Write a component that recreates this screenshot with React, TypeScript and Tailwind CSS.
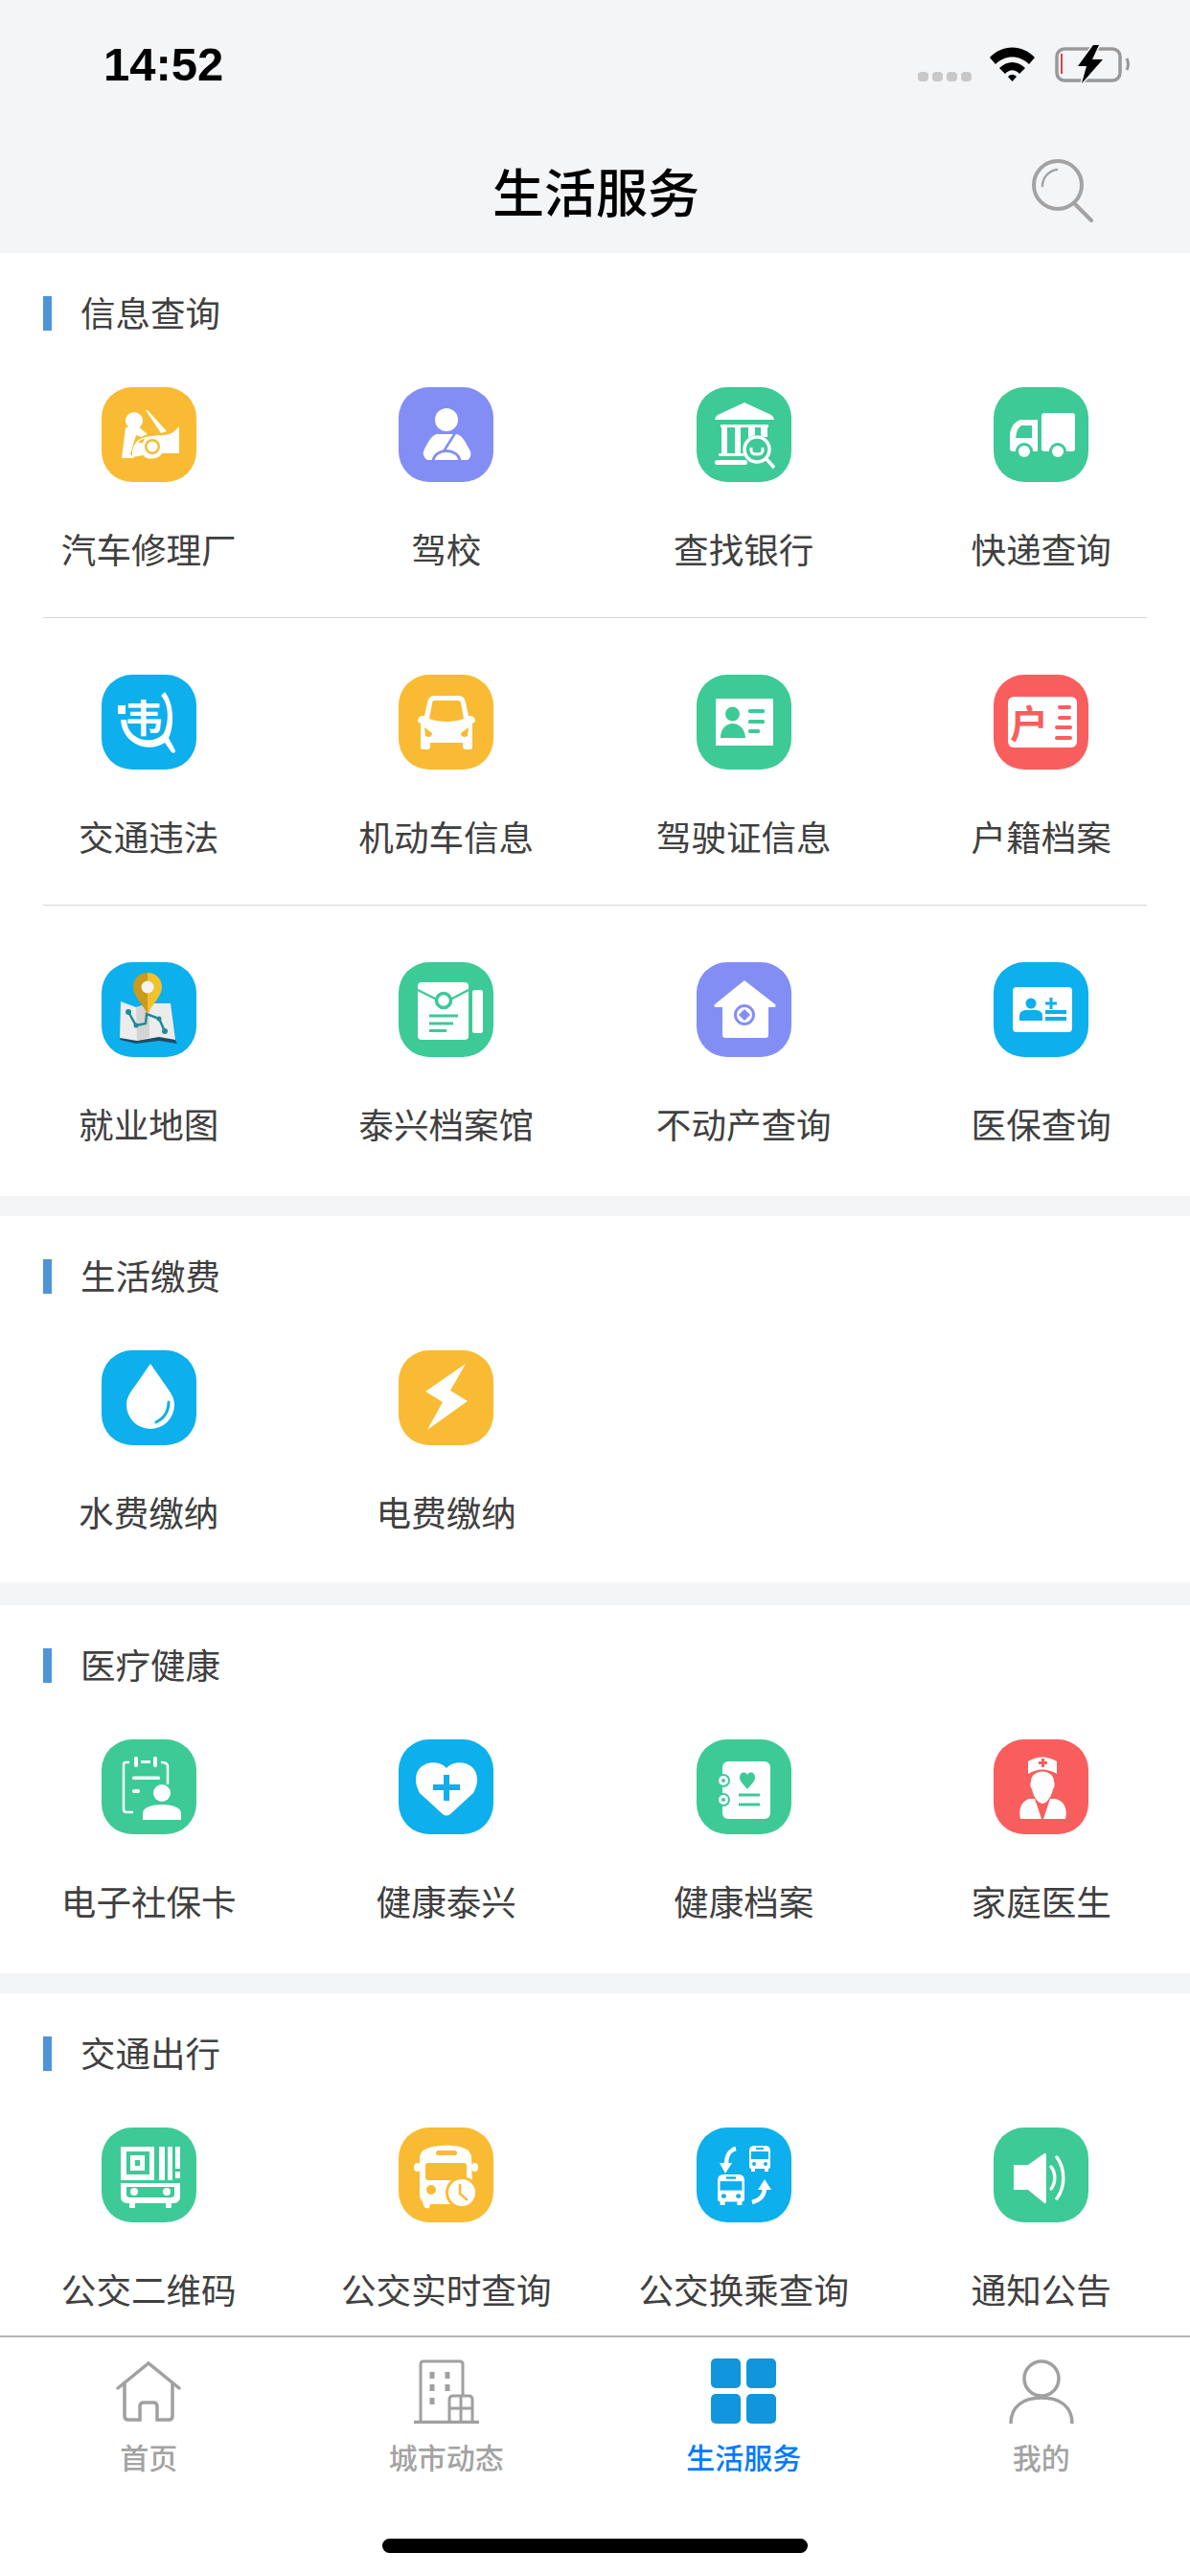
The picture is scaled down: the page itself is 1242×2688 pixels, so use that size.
import React from "react";

const W = "#fff";
const Orange = "#f9bb33";
const Purple = "#838ef5";
const Green = "#3dca96";
const Blue = "#0dafec";
const Red = "#f85e5e";

const Repair = () => (
  <>
    <circle cx="34" cy="35" r="9" fill={W} />
    <path d="M40 32 L43 34 L38 36 Z" fill={W} />
    <path d="M25 42 L38 41 L48 49 L41 52 L36 50 L33 60 L30 70 L34 74 L21 74 Z" fill={W} />
    <path d="M32 73 C31 62 36 54 46 52 C58 49 70 52 76 46 L81 41 L81 69 L63 69 C61 75 46 77 44 71 L32 73 Z" fill={W} />
    <path d="M46 24 L48 24 L68 46 L62 48 Z" fill={W} />
    <circle cx="53" cy="62" r="8" fill={Orange} />
    <circle cx="53" cy="62" r="5.5" fill={W} />
    <path d="M38 58 C40 55 43 54 45 54 L43 58 Z" fill={Orange} />
  </>
);
const Driver = () => (
  <>
    <circle cx="50" cy="34" r="12" fill={W} />
    <path d="M40 49 L60 49 C66 50 68 54 75 67 C76 70 75 74 72 76 L30 76 C27 74 25 70 26 67 C31 56 35 50 40 49 Z" fill={W} />
    <path d="M59 48 L47 67" stroke={Purple} strokeWidth="2.5" fill="none" />
    <path d="M36 77 C38 63 62 63 64 77" stroke={Purple} strokeWidth="3" fill="none" />
  </>
);
const Bank = () => (
  <>
    <path d="M50 16 L78 29 Q81 31 81 34 L19 34 Q19 31 22 29 Z" fill={W} />
    <rect x="25" y="39" width="50" height="3" fill={W} />
    <rect x="26" y="42" width="6" height="27" fill={W} />
    <rect x="40" y="42" width="6" height="27" fill={W} />
    <rect x="54" y="42" width="7" height="12" fill={W} />
    <rect x="67" y="42" width="7" height="10" fill={W} />
    <rect x="23" y="69" width="27" height="3" fill={W} />
    <rect x="19" y="76" width="34" height="5" rx="2.5" fill={W} />
    <circle cx="63" cy="65" r="15" fill={Green} />
    <circle cx="63" cy="65" r="13" fill="none" stroke={W} strokeWidth="3.5" />
    <path d="M57 63 V66 Q57 70 63 70 Q69 70 69 66 V63" fill="none" stroke={W} strokeWidth="3" />
    <path d="M73 75 L81 84" stroke={W} strokeWidth="3.5" />
  </>
);
const Truck = () => (
  <>
    <rect x="50" y="27" width="35" height="40" rx="3" fill={W} />
    <path d="M28 34 L46 34 L46 67 L41 67 C40 58 24 58 23 67 L20 67 Q17 67 17 64 L17 48 Q20 36 28 34 Z" fill={W} />
    <path d="M29 40 L40 40 L40 53 L23 53 Q24 43 29 40 Z" fill={Green} />
    <circle cx="32" cy="67" r="9" fill={Green} />
    <circle cx="32" cy="67" r="6" fill={W} />
    <circle cx="67" cy="67" r="9" fill={Green} />
    <circle cx="67" cy="67" r="6" fill={W} />
  </>
);
const Violation = () => (
  <>
    <path d="M66 18 C76 30 76 54 70 66 L77 79 Q77 83 73 81 L66 71 C50 82 22 74 20 47 L26 47 C27 70 55 74 65 61 C71 48 70 30 62 22 Z" fill={W} />
    <rect x="17" y="32" width="8" height="9" fill={W} />
    <text x="24" y="60" fontSize="40" fontWeight="700" fill={W} fontFamily="'Noto Sans CJK SC',sans-serif">韦</text>
  </>
);
const CarFront = () => (
  <>
    <path d="M36 22 L64 22 Q69 23 70 29 L73 43 L76 43 Q80 44 80 49 L77 51 L77 76 Q77 78 74 78 L70 78 Q67 78 67 75 L67 71 L33 71 L33 75 Q33 78 30 78 L26 78 Q23 78 23 76 L23 51 L20 49 Q20 44 24 43 L27 43 L30 29 Q31 23 36 22 Z" fill={W} />
    <path d="M38 27 L62 27 Q65 27 65 30 L68 46 C58 50 42 50 32 46 L35 30 Q35 27 38 27 Z" fill={Orange} />
    <path d="M27 55 L35 61 Q35 65 31 65 L28 64 Z M73 55 L65 61 Q65 65 69 65 L72 64 Z" fill={Orange} />
  </>
);
const License = () => (
  <>
    <rect x="20" y="25" width="60" height="49" fill={W} />
    <circle cx="37.5" cy="41" r="7.5" fill={Green} />
    <path d="M25 66 C25 46 50 46 51 66 Z" fill={Green} />
    <rect x="54" y="36" width="17" height="4" rx="1.5" fill={Green} />
    <rect x="54" y="47" width="17" height="4" rx="1.5" fill={Green} />
    <rect x="54" y="57" width="12" height="4" rx="1.5" fill={Green} />
  </>
);
const Hukou = () => (
  <>
    <rect x="15" y="23" width="72" height="53" rx="6" fill={W} />
    <text x="17" y="66" fontSize="40" fontWeight="700" fill={Red} fontFamily="'Noto Sans CJK SC',sans-serif">户</text>
    <rect x="67" y="32" width="14" height="4" rx="2" fill={Red} />
    <rect x="67" y="43" width="14" height="4" rx="2" fill={Red} />
    <rect x="64" y="53" width="18" height="4" rx="2" fill={Red} />
    <rect x="64" y="64" width="18" height="4" rx="2" fill={Red} />
  </>
);
const MapIcon = () => (
  <>
    <path d="M19 81 L36 85 L60 82 L79 85 L73 75 L22 75 Z" fill="#1d4d66" />
    <path d="M20 41 L36 47 L50 43 L72 43 L77 81 L60 78 L37 82 L19 79 Z" fill="#ececec" />
    <path d="M36 47 L50 43 L50 78 L37 82 Z" fill="#d4d4d4" />
    <path d="M28 52 L36 66 L46 64 L47 54 L60 59 L66 72" stroke="#1e8a9a" strokeWidth="2.5" fill="none" />
    <circle cx="28" cy="52" r="3" fill="#1e8a9a" />
    <circle cx="36" cy="66" r="2.5" fill="#1e8a9a" />
    <circle cx="60" cy="59" r="2.5" fill="#1e8a9a" />
    <circle cx="66" cy="72" r="3" fill="#1e8a9a" />
    <path d="M48 11 C39 11 33 18 33 26 C33 35 43 44 48 54 Z" fill="#c99a1b" />
    <path d="M48 11 C57 11 63 18 63 26 C63 35 53 44 48 54 Z" fill="#f2c12e" />
    <circle cx="48" cy="26" r="6.5" fill="#f4f4f4" />
  </>
);
const Archive = () => (
  <>
    <path d="M24 21 L69 21 Q73 21 73 25 L73 77 Q73 81 69 81 L24 81 Q20 81 20 77 L20 25 Q20 21 24 21 Z" fill={W} />
    <path d="M20 29 L40 39 M54 39 L73 29" stroke={Green} strokeWidth="2.5" fill="none" />
    <circle cx="47" cy="40" r="7.5" fill={W} stroke={Green} strokeWidth="3.5" />
    <rect x="32" y="54.5" width="30" height="3" fill={Green} />
    <rect x="32" y="62.5" width="25" height="3" fill={Green} />
    <rect x="32" y="70" width="18" height="3" fill={Green} />
    <rect x="77" y="29" width="11" height="45" rx="2.5" fill={W} />
  </>
);
const House = () => (
  <>
    <path d="M50 19 L82 44 Q84 47 80 47 L75 47 L75 76 Q75 79 72 79 L30 79 Q27 79 27 76 L27 47 L21 47 Q17 47 19 44 Z" fill={W} />
    <circle cx="50" cy="55" r="9.5" fill={W} stroke={Purple} strokeWidth="3" />
    <path d="M50 49 L56 55 L50 61 L44 55 Z" fill={Purple} />
  </>
);
const Medical = () => (
  <>
    <rect x="20" y="26" width="62" height="47" rx="4" fill={W} />
    <circle cx="39" cy="43" r="5.5" fill={Blue} />
    <path d="M27 61 L27 56 Q27 51 33 50 L45 50 Q51 51 51 56 L51 61 Z" fill={Blue} />
    <path d="M58.5 37 H61.5 V41.5 H66 V44.5 H61.5 V49 H58.5 V44.5 H54 V41.5 H58.5 Z" fill={Blue} />
    <rect x="54" y="50" width="22" height="4" fill={Blue} />
    <rect x="54" y="57" width="22" height="4" fill={Blue} />
  </>
);
const Water = () => (
  <>
    <path d="M51 14 L67 37 C72 44 76 49 76 57 A25 25 0 0 1 26 57 C26 49 30 44 35 37 Z" fill={W} />
    <path d="M70 54 C70 64 65 71 57 75" stroke={Blue} strokeWidth="3" strokeLinecap="round" fill="none" />
  </>
);
const Bolt = () => <path d="M70 14 L28 43 L46 54 L30 83 L72 53 L54 42 Z" fill={W} />;
const Social = () => (
  <>
    <path d="M29 24 L25 24 Q23 24 23 27 L23 73 Q23 76 26 76 L33 76 M62 24 Q69 24 69 28 L69 47" stroke={W} strokeWidth="2.5" fill="none" />
    <rect x="34" y="18" width="4" height="11" rx="2" fill={W} />
    <rect x="54" y="18" width="4" height="11" rx="2" fill={W} />
    <rect x="41" y="22" width="10" height="3" fill={W} />
    <rect x="32" y="38.5" width="29" height="3.5" rx="1.5" fill={W} />
    <rect x="32" y="52" width="8" height="4" rx="2" fill={W} />
    <circle cx="63" cy="56" r="9" fill={W} />
    <path d="M43 84 L43 77 C43 65 83 65 83 77 L83 84 Z" fill={W} />
  </>
);
const Heart = () => (
  <>
    <path d="M50 30 C58 20 82 22 82 42 C82 48 80 52 78 56 L54 78 Q50 81 46 78 L22 56 C20 52 18 48 18 42 C18 22 42 20 50 30 Z" fill={W} />
    <path d="M47 37 H53 V47 H64 V53 H53 V64 H47 V53 H36 V47 H47 Z" fill={Blue} />
  </>
);
const Book = () => (
  <>
    <rect x="27" y="23" width="50" height="60" rx="6" fill={W} />
    <circle cx="28" cy="43" r="6" fill={W} stroke={Green} strokeWidth="2" />
    <circle cx="28" cy="63" r="6" fill={W} stroke={Green} strokeWidth="2" />
    <circle cx="28" cy="43" r="2" fill={Green} />
    <circle cx="28" cy="63" r="2" fill={Green} />
    <path d="M53 37 C55 33 61 34 61 40 C61 44 56 48 53 52 C50 48 45 44 45 40 C45 34 51 33 53 37 Z" fill={Green} />
    <rect x="44" y="56.5" width="22" height="3" fill={Green} />
    <rect x="44" y="66.5" width="22" height="3" fill={Green} />
  </>
);
const Nurse = () => (
  <>
    <path d="M36 23 Q51 14 66 23 L66 36 Q51 27 36 36 Z" fill={W} />
    <path d="M50 20 H53 V23 H56 V26 H53 V29 H50 V26 H47 V23 H50 Z" fill={Red} />
    <path d="M39 44 C39 30 63 30 63 44 C64 46 64 50 62 52 C60 62 54 67 51 67 C48 67 42 62 40 52 C38 50 38 46 39 44 Z" fill={W} />
    <path d="M37 62 L43 62 L50 83 L28 83 C26 74 28 65 37 62 Z" fill={W} />
    <path d="M65 62 L59 62 L52 83 L75 83 C77 74 75 65 65 62 Z" fill={W} />
  </>
);
const QrBus = () => (
  <>
    <rect x="20" y="20" width="35" height="35" fill={W} />
    <rect x="26" y="25" width="24" height="24" fill={Green} />
    <rect x="30" y="29" width="15" height="16" fill={W} />
    <rect x="35" y="34" width="5" height="6" fill={Green} />
    <rect x="60" y="20" width="6" height="35" fill={W} />
    <rect x="69" y="20" width="5" height="35" fill={W} />
    <rect x="77" y="20" width="5" height="23" fill={W} />
    <rect x="77" y="46" width="5" height="7" fill={W} />
    <path d="M20 58 H82 V72 Q82 78 76 79 L26 79 Q20 78 20 72 Z" fill={W} />
    <path d="M26 62 H76 V70 Q76 73 72 73 L30 73 Q26 73 26 70 Z" fill={Green} />
    <circle cx="34" cy="67" r="4" fill={W} />
    <circle cx="68" cy="67" r="4" fill={W} />
    <rect x="29" y="78" width="6" height="6" rx="1" fill={W} />
    <rect x="67" y="78" width="6" height="6" rx="1" fill={W} />
  </>
);
const BusClock = () => (
  <>
    <path d="M36 20 Q50 17 64 20 Q74 22 76 30 L77 62 L56 80 L33 80 L32 84 Q28 85 26 82 L25 77 Q22 75 22 70 L22 30 Q24 22 36 20 Z" fill={W} />
    <rect x="16" y="37" width="7" height="9" rx="4" fill={W} />
    <rect x="76" y="37" width="7" height="9" rx="4" fill={W} />
    <rect x="39" y="24" width="22" height="5" rx="2.5" fill={Orange} />
    <rect x="28" y="37" width="43" height="18" rx="3" fill={Orange} />
    <circle cx="34" cy="65" r="5" fill={Orange} />
    <circle cx="66" cy="68" r="17" fill={Orange} />
    <circle cx="66" cy="68" r="14" fill={W} />
    <path d="M64 60 L64 69 L71 75" stroke={Orange} strokeWidth="2.5" fill="none" strokeLinecap="round" />
  </>
);
const BusMini = ({ x, y, w, h, c }: { x: number; y: number; w: number; h: number; c: string }) => (
  <g transform={`translate(${x} ${y}) scale(${w / 22} ${h / 27})`}>
    <path d="M4 0 H18 Q22 1 22 5 V22 Q22 24 20 24 V27 H16 V24 H6 V27 H2 V24 Q0 24 0 22 V5 Q0 1 4 0 Z" fill={W} />
    <rect x="7" y="2" width="8" height="2" fill={c} />
    <rect x="2" y="6" width="18" height="8" fill={c} />
    <circle cx="5" cy="19" r="2" fill={c} />
    <circle cx="17" cy="19" r="2" fill={c} />
  </g>
);
const Transfer = () => (
  <>
    <BusMini x={55} y={19} w={22} h={27} c={Blue} />
    <BusMini x={22} y={49} w={28} h={32} c={Blue} />
    <path d="M41 22 C33 24 31 32 31 38" stroke={W} strokeWidth="4.5" fill="none" />
    <path d="M24 37 L37 37 L30 48 Z" fill={W} />
    <path d="M58 78 C66 76 71 72 71 63" stroke={W} strokeWidth="4.5" fill="none" />
    <path d="M64 65 L78 65 L71 54 Z" fill={W} />
  </>
);
const Speaker = () => (
  <>
    <path d="M21 39 H36 L53 27 Q55 26 55 29 V77 Q55 80 53 79 L36 65 H21 Z" fill={W} />
    <path d="M60 41 C65 47 65 58 60 64" stroke={W} strokeWidth="3.5" strokeLinecap="round" fill="none" />
    <path d="M66 31 C75 43 75 62 66 74" stroke={W} strokeWidth="3.5" strokeLinecap="round" fill="none" />
  </>
);

type Item = { label: string; color: string; Glyph: React.FC };

const Tile = ({ label, color, Glyph }: Item) => (
  <div className="flex flex-col items-center">
    <div className="w-[99px] h-[99px] rounded-[32px] overflow-hidden" style={{ backgroundColor: color }}>
      <svg viewBox="0 0 99 99" className="w-[99px] h-[99px] block">
        <Glyph />
      </svg>
    </div>
    <div className="mt-[45px] h-[50px] text-[36.6px] leading-[50px] text-[#404040] whitespace-nowrap">{label}</div>
  </div>
);

const Row = ({ items, divided }: { items: Item[]; divided?: boolean }) => (
  <div className={divided ? "mx-[45px] pt-[59px] pb-[46px] border-b border-[#d6d6d6]" : "mx-[45px] pt-[59px]"}>
    <div className="grid grid-cols-4 -mx-[45px]">
      {items.map((i) => (
        <Tile key={i.label} {...i} />
      ))}
    </div>
  </div>
);

const SectionTitle = ({ text }: { text: string }) => (
  <div className="flex items-center h-[36px] ml-[45px]">
    <div className="w-[9px] h-[36px] bg-[#4f94d9]" />
    <div className="ml-[30px] pb-[2px] text-[36.5px] leading-[34px] text-[#404040]">{text}</div>
  </div>
);

const rows: Item[][] = [
  [
    { label: "汽车修理厂", color: Orange, Glyph: Repair },
    { label: "驾校", color: Purple, Glyph: Driver },
    { label: "查找银行", color: Green, Glyph: Bank },
    { label: "快递查询", color: Green, Glyph: Truck },
  ],
  [
    { label: "交通违法", color: Blue, Glyph: Violation },
    { label: "机动车信息", color: Orange, Glyph: CarFront },
    { label: "驾驶证信息", color: Green, Glyph: License },
    { label: "户籍档案", color: Red, Glyph: Hukou },
  ],
  [
    { label: "就业地图", color: Blue, Glyph: MapIcon },
    { label: "泰兴档案馆", color: Green, Glyph: Archive },
    { label: "不动产查询", color: Purple, Glyph: House },
    { label: "医保查询", color: Blue, Glyph: Medical },
  ],
];
const pay: Item[] = [
  { label: "水费缴纳", color: Blue, Glyph: Water },
  { label: "电费缴纳", color: Orange, Glyph: Bolt },
];
const health: Item[] = [
  { label: "电子社保卡", color: Green, Glyph: Social },
  { label: "健康泰兴", color: Blue, Glyph: Heart },
  { label: "健康档案", color: Green, Glyph: Book },
  { label: "家庭医生", color: Red, Glyph: Nurse },
];
const traffic: Item[] = [
  { label: "公交二维码", color: Green, Glyph: QrBus },
  { label: "公交实时查询", color: Orange, Glyph: BusClock },
  { label: "公交换乘查询", color: Blue, Glyph: Transfer },
  { label: "通知公告", color: Green, Glyph: Speaker },
];

const Tab = ({ label, active, children }: { label: string; active?: boolean; children: React.ReactNode }) => (
  <div className="flex flex-col items-center">
    <div className="h-[68px] flex items-center justify-center">{children}</div>
    <div className={active ? "mt-[17px] text-[30px] leading-[34px] font-medium text-[#007aff]" : "mt-[17px] text-[30px] leading-[34px] font-medium text-[#a3a3a3]"}>
      {label}
    </div>
  </div>
);

const Gray = "#a0a0a0";

export default function App() {
  return (
    <div className="w-[1242px] h-[2688px] flex flex-col overflow-hidden bg-[#f4f5f7] font-['Noto_Sans_CJK_SC','Liberation_Sans',sans-serif]">
      <header className="h-[264px] shrink-0">
        <div className="h-[134px] flex items-center justify-between pl-[108px] pr-[61px]">
          <div className="text-[49px] leading-[49px] font-bold text-black font-['Liberation_Sans',sans-serif]">14:52</div>
          <div className="flex items-center">
            <div className="flex gap-[4px] mt-[26px]">
              <div className="w-[11px] h-[10px] rounded-[4px] bg-[#c8c8c8]" />
              <div className="w-[11px] h-[10px] rounded-[4px] bg-[#c8c8c8]" />
              <div className="w-[11px] h-[10px] rounded-[4px] bg-[#c8c8c8]" />
              <div className="w-[11px] h-[10px] rounded-[4px] bg-[#c8c8c8]" />
            </div>
            <svg viewBox="0 0 47 36" className="w-[47px] h-[36px] ml-[19px]">
              <path d="M0 11 C13 -3 34 -3 47 11 L41 18 C31 8 16 8 6 18 Z" fill="#000" />
              <path d="M10 22 C18 14 29 14 37 22 L31 28 C26 23 21 23 16 28 Z" fill="#000" />
              <path d="M19 31 C22 28 25 28 28 31 L23.5 36 Z" fill="#000" />
            </svg>
            <svg viewBox="0 0 80 40" className="w-[80px] h-[40px] ml-[21px]">
              <rect x="2" y="4" width="66" height="33" rx="8" fill="none" stroke="#999" strokeWidth="3.5" />
              <path d="M75 14 Q78 20 75 26" fill="none" stroke="#999" strokeWidth="3" />
              <rect x="6" y="9" width="2" height="21" fill="#f03a3a" />
              <path d="M40 0 L24 22 L33 22 L28 40 L50 15 L39 15 L46 0 Z" fill="#000" stroke="#f4f5f7" strokeWidth="3" paintOrder="stroke" />
            </svg>
          </div>
        </div>
        <div className="h-[130px] flex items-center justify-between pl-[514px] pr-[100px]">
          <div className="text-[54px] leading-[60px] font-medium text-black">生活服务</div>
          <svg viewBox="0 0 66 66" className="w-[66px] h-[66px]">
            <circle cx="28" cy="27" r="25" fill="none" stroke="#a3a3a3" strokeWidth="4" />
            <path d="M12 28 C12 19 19 12 27 11" fill="none" stroke="#a3a3a3" strokeWidth="2.5" strokeLinecap="round" />
            <path d="M45 46 L63 64" stroke="#a3a3a3" strokeWidth="4" strokeLinecap="round" />
          </svg>
        </div>
      </header>

      <main className="flex-1 overflow-hidden">
        <section className="bg-white pt-[45px] pb-[50px]">
          <SectionTitle text="信息查询" />
          <Row items={rows[0]} divided />
          <Row items={rows[1]} divided />
          <Row items={rows[2]} />
        </section>
        <section className="bg-white mt-[21px] pt-[45px] pb-[48px]">
          <SectionTitle text="生活缴费" />
          <Row items={pay} />
        </section>
        <section className="bg-white mt-[24px] pt-[45px] pb-[50px]">
          <SectionTitle text="医疗健康" />
          <Row items={health} />
        </section>
        <section className="bg-white mt-[21px] pt-[45px] pb-[60px]">
          <SectionTitle text="交通出行" />
          <Row items={traffic} />
        </section>
      </main>

      <footer className="shrink-0 bg-white border-t-2 border-[#b4b4b4]">
        <div className="grid grid-cols-4 pt-[22px]">
          <Tab label="首页">
            <svg viewBox="0 0 68 68" className="w-[68px] h-[68px]" fill="none" stroke={Gray} strokeWidth="3.5">
              <path d="M2 31 L34 5 L66 31" strokeLinecap="round" />
              <path d="M9 25 V60 Q9 64 13 64 H25 V50 Q25 46 29 46 H39 Q43 46 43 50 V64 H55 Q59 64 59 60 V25" />
            </svg>
          </Tab>
          <Tab label="城市动态">
            <svg viewBox="0 0 68 68" className="w-[68px] h-[68px]" fill="none" stroke={Gray} strokeWidth="3">
              <path d="M7 66 V6 Q7 3 10 3 H48 Q51 3 51 6 V39" />
              <path d="M0 66.5 H68" strokeWidth="3.5" />
              <path d="M37 66 V43 Q37 39 41 39 H57 Q61 39 61 43 V66 M37 52 H61 M49 39 V66" />
              <path d="M19 14 V21 M35 14 V21 M19 27 V34 M35 27 V34 M19 41 V48" strokeWidth="5" />
            </svg>
          </Tab>
          <Tab label="生活服务" active>
            <div className="grid grid-cols-2 gap-[6px]">
              <div className="w-[31px] h-[31px] rounded-[5px] bg-[#1296db]" />
              <div className="w-[31px] h-[31px] rounded-[5px] bg-[#1296db]" />
              <div className="w-[31px] h-[31px] rounded-[5px] bg-[#1296db]" />
              <div className="w-[31px] h-[31px] rounded-[5px] bg-[#1296db]" />
            </div>
          </Tab>
          <Tab label="我的">
            <svg viewBox="0 0 68 68" className="w-[68px] h-[68px]" fill="none" stroke={Gray} strokeWidth="3.5">
              <circle cx="34" cy="21" r="18" />
              <path d="M2 68 C2 50 15 41 34 41 C53 41 66 50 66 68" />
            </svg>
          </Tab>
        </div>
        <div className="flex justify-center mt-[69px] mb-[24px]">
          <div className="w-[444px] h-[15px] rounded-[8px] bg-black" />
        </div>
      </footer>
    </div>
  );
}
